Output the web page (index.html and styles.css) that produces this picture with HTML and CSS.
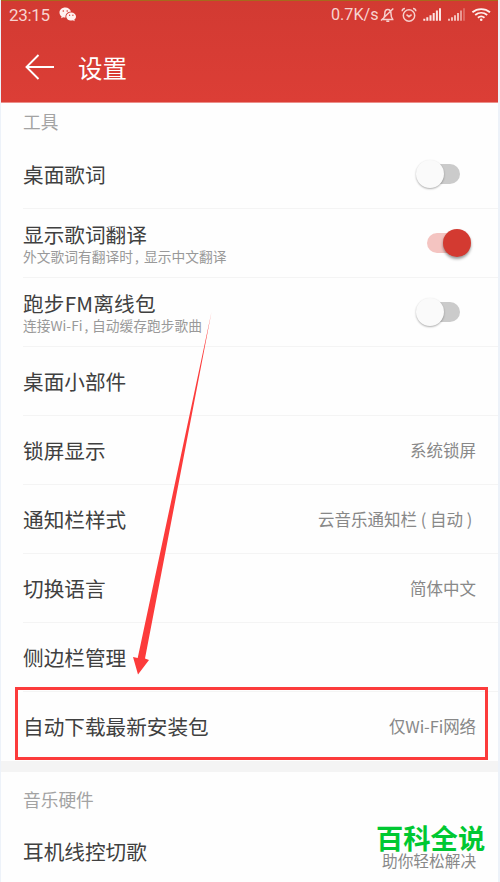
FILE: index.html
```html
<!DOCTYPE html>
<html lang="zh-CN">
<head>
<meta charset="utf-8">
<title>设置</title>
<link rel="stylesheet" href="styles.css">
</head>
<body>
<div class="screen">
  <header class="header">
    <div class="status">
      <span class="time">23:15</span>
      <svg class="wechat" width="18" height="16" viewBox="0 0 18 16"><path fill="#fff2f0" d="M6.300.5C3 .5.5 2.700.5 5.500c0 1.600.8 3 2.100 3.900l-.5 1.900 2.200-1.100c.7.2 1.400.3 2.200.3C6.200 7 8.700 4.700 12 4.600 11.400 2.200 9.200.5 6.300.5z"/><path fill="#fff2f0" d="M17 9.500c0-2.300-2.100-4.100-4.800-4.100S7.300 7.200 7.300 9.500s2.200 4.100 4.900 4.100c.6 0 1.200-.1 1.700-.3l1.800.9-.4-1.600c1.100-.8 1.700-1.900 1.700-3.100z"/><g fill="#d43c34"><circle cx="4.300" cy="4" r=".8"/><circle cx="8.200" cy="4" r=".8"/><circle cx="10.600" cy="8.300" r=".7"/><circle cx="13.900" cy="8.300" r=".7"/></g></svg>
      <span class="speed">0.7K/s</span>
      <svg class="icons" width="112" height="18" viewBox="380 6 112 18" fill="none" stroke="#f6cfcc" stroke-width="1.500">
        <path d="M382 19.500h11.500M383.500 18.500c1.300-1.400 1.300-3 1.300-4.700 0-2.500 1-4.300 2.900-4.300s3.300 1.700 3.300 4.300c0 2 .2 3.800 1.600 5.300M386.300 21.300h3M381 20.500L393.300 8.500"/>
        <circle cx="409" cy="15.500" r="5.700"/><path d="M406.500 14.700l2.500 2 2.600-2M402.200 11.300c0-1.800 1-2.700 2.800-2.800M415.800 11.300c0-1.800-1-2.700-2.800-2.800"/>
        <g fill="#fbe5e3" stroke="none"><path d="M423.300 18.800h2v2h-2zM426.300 17.200h2v3.600h-2zM429.500 15.200h2v5.600h-2zM432.700 12.900h2v7.900h-2zM435.900 10.500h2v10.300h-2zM439 8.200h2v12.600h-2z"/></g>
        <g fill="#f3bfba" stroke="none"><path d="M448 18.800h2v2h-2zM451 17.200h2v3.600h-2zM454 15.200h2v5.600h-2zM457 12.900h2v7.900h-2z"/><path opacity=".7" d="M460 10.500h2v10.300h-2z"/><path opacity=".35" d="M463 8.200h2v12.600h-2z"/></g>
        <g stroke="#fff0ee" stroke-width="1.900"><path d="M472.400 12.300c5-4.300 12.600-4.300 17.600 0M475.200 15.100c3.600-3 8.400-3 12 0M477.900 17.700c2-1.600 4.600-1.600 6.600 0"/><circle cx="481.200" cy="19.700" r="1.300" fill="#fff0ee" stroke="none"/></g>
      </svg>
    </div>
    <div class="bar">
      <svg width="30" height="28" viewBox="0 0 30 28" fill="none" stroke="#fff" stroke-width="1.900"><path d="M14.500 2L2.500 14l12 12M2.500 14H30"/></svg>
      <h1>设置</h1>
    </div>
  </header>

  <h2 class="section">工具</h2>
  <ul class="list">
    <li><div class="name">桌面歌词</div><span class="toggle"></span></li>
    <li><div class="name">显示歌词翻译<small>外文歌词有翻译时<i>,</i>显示中文翻译</small></div><span class="toggle on"></span></li>
    <li><div class="name"><span class="fm">跑步FM离线包</span><small>连接Wi-Fi<i class="tight">,</i>自动缓存跑步歌曲</small></div><span class="toggle"></span></li>
    <li><div class="name">桌面小部件</div></li>
    <li><div class="name">锁屏显示</div><span class="value">系统锁屏</span></li>
    <li><div class="name">通知栏样式</div><span class="value">云音乐通知栏<b class="paren">(</b>自动<b class="paren">)</b></span></li>
    <li><div class="name">切换语言</div><span class="value">简体中文</span></li>
    <li><div class="name">侧边栏管理</div></li>
    <li><div class="name">自动下载最新安装包</div><span class="value wifi">仅Wi-Fi网络</span></li>
  </ul>
  <div class="gap"></div>
  <h2 class="section hardware">音乐硬件</h2>
  <ul class="list"><li><div class="name">耳机线控切歌</div></li></ul>

  <svg class="pointer" width="90" height="370" viewBox="130 310 90 370"><path fill="#fc3b3b" d="M211.500 312L145 658.500l4 1.500-11 14.500-5-17.500 4.700 1z"/></svg>
  <div class="highlight"></div>
  <div class="brand"><strong>百科全说</strong><span>助你轻松解决</span></div>
</div>
</body>
</html>
```

FILE: styles.css
```css
* { box-sizing: border-box; }
body {
  margin: 0;
  background: #edf2f9;
  font-family: "Noto Sans CJK SC", sans-serif;
}
.screen {
  position: relative;
  width: 497px;
  height: 882px;
  margin-left: 1px;
  overflow: hidden;
  background: #fefefe;
}
.header {
  height: 103px;
  background: linear-gradient(#d23a32, #dc3e36);
  border-top: 1px solid #a66a1c;
  border-bottom: 1px solid #ec8f8a;
  color: #fff;
}
.status {
  display: flex;
  align-items: center;
  height: 28px;
  padding-left: 8px;
  font: 17px/28px Roboto, sans-serif;
  color: #f7d3d0;
}
.time { width: 50px; letter-spacing: -.3px; }
.speed { width: 49px; margin-left: 254px; font-size: 16.200px; line-height: 30px; white-space: nowrap; }
.icons { flex: none; }
.bar {
  display: flex;
  align-items: center;
  height: 76px;
  padding: 0 0 0 23px;
}
h1 {
  margin: 2px 0 0 24px;
  font-size: 24.500px;
  line-height: 36px;
  font-weight: 400;
}
.section {
  height: 37px;
  margin: 0;
  padding-left: 22px;
  font-size: 17.700px;
  line-height: 36px;
  font-weight: 400;
  color: #a3a3a3;
}
.hardware { height: 45px; line-height: 54px; }
.list { margin: 0; padding: 0 0 0 22px; list-style: none; }
.list li {
  display: flex;
  align-items: center;
  justify-content: space-between;
  height: 69px;
  padding-right: 22px;
  border-bottom: 1px solid #f4f4f4;
}
.list li:last-child { border-color: transparent; }
.name { font-size: 20.650px; line-height: 28px; color: #404040; }
.fm { letter-spacing: .2px; }
small {
  display: block;
  margin-top: -2px;
  font-size: 13.750px;
  line-height: 20px;
  color: #999;
}
small i { display: inline-block; width: 11px; padding-left: 2px; font-style: normal; }
small .tight { width: 9.500px; }
.value { font-size: 16.500px; line-height: 24px; color: #888; }
.wifi { letter-spacing: -.1px; }
.paren { display: inline-block; width: 13px; font-weight: 400; text-align: center; }
.toggle {
  position: relative;
  width: 33px;
  height: 20px;
  margin-right: 16px;
  border-radius: 10px;
  background: #cbcbcb;
}
.toggle::after {
  content: "";
  position: absolute;
  left: -11px;
  top: -4px;
  width: 28px;
  height: 28px;
  border-radius: 50%;
  background: #fafafa;
  box-shadow: 0 1px 2px rgba(0, 0, 0, .32);
}
.toggle.on { background: #f4c4c1; }
.toggle.on::after { left: 16px; background: #d33a31; box-shadow: 0 2px 3px rgba(0, 0, 0, .4); }
.gap { height: 11px; background: #f4f4f4; }
.pointer { position: absolute; left: 129px; top: 310px; }
.highlight {
  position: absolute;
  left: 14px;
  top: 687px;
  width: 473px;
  height: 73px;
  border: 3px solid #fc3b3b;
}
.brand {
  position: absolute;
  left: 375px;
  top: 819px;
  display: flex;
  flex-direction: column;
  white-space: nowrap;
}
.brand strong { font-size: 27.300px; line-height: 36px; font-weight: 700; color: #00c832; }
.brand span { margin: -2px 0 0 6px; font-size: 15.700px; line-height: 16px; color: #888; }
```
